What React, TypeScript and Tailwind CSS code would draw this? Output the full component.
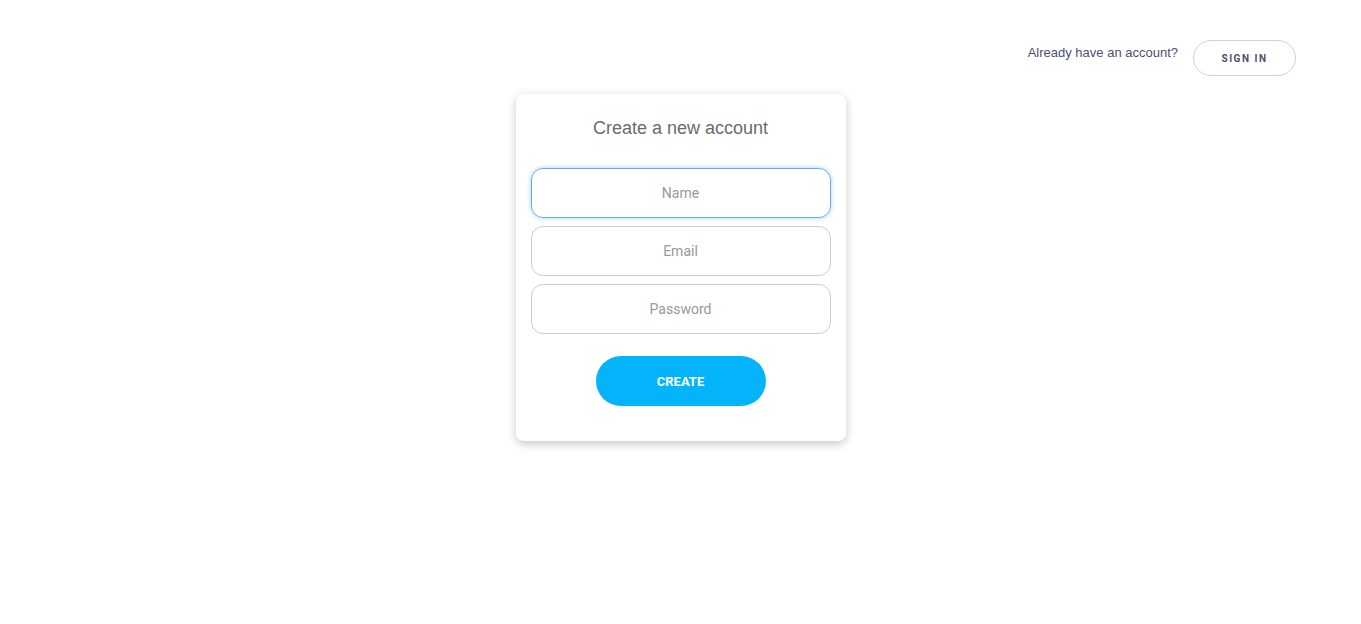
import { useState } from "react";

export default function App() {
  const [name, setName] = useState("");
  const [email, setEmail] = useState("");
  const [password, setPassword] = useState("");

  return (
    <main className="min-h-screen bg-white font-['Liberation_Sans',Arial,sans-serif]">
      {/* Top bar */}
      <div className="flex justify-end items-start pt-[40px] pr-[65px]">
        <span className="mt-[5px] text-[13px] leading-[16px] text-[#4f4f6b]">
          Already have an account?
        </span>
        <button className="ml-[15px] w-[103px] h-[36px] rounded-full border border-[#d0d0dc] bg-white text-[10px] font-bold tracking-[1.5px] text-[#4f4f6b] font-['Roboto',sans-serif]">
          SIGN IN
        </button>
      </div>

      {/* Card */}
      <div className="mx-auto mt-[18px] w-[330px] rounded-[8px] bg-white px-[15px] pt-[23px] pb-[35px] shadow-[0_3px_10px_rgba(0,0,0,0.22)]">
        <h1 className="text-center text-[18px] leading-[22px] text-[#6b6b6b]">
          Create a new account
        </h1>

        <form
          className="mt-[29px] flex flex-col gap-[8px]"
          onSubmit={(e) => e.preventDefault()}
        >
          <input
            autoFocus
            className="h-[50px] w-full rounded-[12px] border border-[#68adee] text-center text-[14px] text-[#555] outline-none shadow-[0_0_4px_rgba(104,173,238,0.6)] placeholder:text-[#999] font-['Roboto',sans-serif]"
            placeholder="Name"
            value={name}
            onChange={(e) => setName(e.target.value)}
          />
          <input
            className="h-[50px] w-full rounded-[12px] border border-[#cccccc] text-center text-[14px] text-[#555] outline-none placeholder:text-[#999] font-['Roboto',sans-serif]"
            placeholder="Email"
            value={email}
            onChange={(e) => setEmail(e.target.value)}
          />
          <input
            type="password"
            className="h-[50px] w-full rounded-[12px] border border-[#cccccc] text-center text-[14px] text-[#555] outline-none placeholder:text-[#999] font-['Roboto',sans-serif]"
            placeholder="Password"
            value={password}
            onChange={(e) => setPassword(e.target.value)}
          />

          <button
            type="submit"
            className="mx-auto mt-[14px] h-[50px] w-[170px] rounded-full bg-[#03b4fb] pt-[2px] text-[13px] font-bold text-white font-['Roboto',sans-serif]"
          >
            CREATE
          </button>
        </form>
      </div>
    </main>
  );
}
